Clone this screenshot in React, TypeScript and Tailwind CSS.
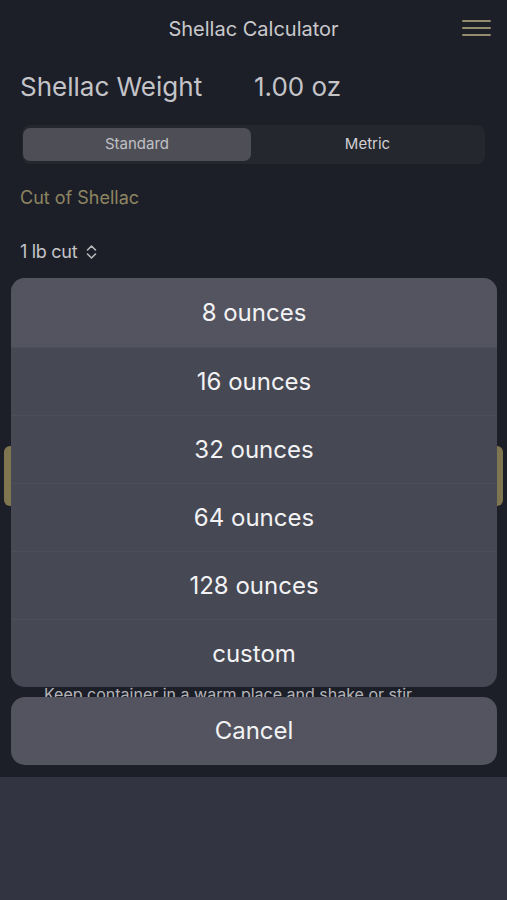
import React from 'react'

const options = ['8 ounces', '16 ounces', '32 ounces', '64 ounces', '128 ounces', 'custom']

function ChevronUpDown() {
  return (
    <svg width="13" height="16" viewBox="0 0 13 16" fill="none" aria-hidden="true">
      <path d="M2.5 6 L6.5 2 L10.5 6" stroke="#b8b8bc" strokeWidth="1.6" strokeLinecap="round" strokeLinejoin="round" />
      <path d="M2.5 10 L6.5 14 L10.5 10" stroke="#b8b8bc" strokeWidth="1.6" strokeLinecap="round" strokeLinejoin="round" />
    </svg>
  )
}

export default function App() {
  return (
    <div
      className="relative flex min-h-[900px] w-[507px] flex-col bg-[#323541]"
      style={{ fontFamily: 'Inter, "Noto Sans", sans-serif' }}
    >
      {/* Page behind the sheet */}
      <div className="flex h-[777px] flex-col overflow-hidden bg-[#1d1f28]">
        <header className="relative flex h-[58px] shrink-0 items-center justify-center">
          <span className="text-[20px] text-[#c9c9cc]">Shellac Calculator</span>
          <div className="absolute right-[16px] top-[20px] flex w-[29px] flex-col gap-[5px]">
            <span className="h-[2px] rounded bg-[#948c6c]" />
            <span className="h-[2px] rounded bg-[#948c6c]" />
            <span className="h-[2px] rounded bg-[#948c6c]" />
          </div>
        </header>

        <div className="flex items-center px-[20px] pt-[9px]">
          <span className="w-[234px] text-[26px] text-[#c4c4c8]">Shellac Weight</span>
          <span className="text-[26px] text-[#c4c4c8]">1.00 oz</span>
        </div>

        <div className="mx-[22px] mt-[19px] flex h-[39px] shrink-0 items-center rounded-[8px] bg-[#25272e] px-[1px]">
          <div className="flex h-[33px] w-[228px] items-center justify-center rounded-[7px] bg-[#4e4f56] text-[15px] text-[#c0c0c4]">
            Standard
          </div>
          <div className="flex flex-1 items-center justify-center text-[15px] text-[#d0d0d4]">Metric</div>
        </div>

        <div className="mt-[20px] px-[20px] text-[18px] text-[#8e8662]">Cut of Shellac</div>

        <div className="mt-[27px] flex items-center gap-[8px] px-[20px]">
          <span className="text-[18px] tracking-[-0.3px] text-[#c4c4c8]">1 lb cut</span>
          <ChevronUpDown />
        </div>

        <div className="mx-[4px] mt-[181px] h-[60px] shrink-0 rounded-[6px] bg-[#7f7650]" />

        <p className="mt-[176px] whitespace-nowrap px-[44px] text-[16px] leading-[24px] text-[#b4b4b8]">
          Keep container in a warm place and shake or stir
        </p>
      </div>

      {/* Action sheet */}
      <div className="absolute left-[11px] top-[278px] w-[486px]">
        <div className="overflow-hidden rounded-[14px] bg-[#464853]">
          {options.map((opt, i) => (
            <div
              key={opt}
              className={`flex items-center justify-center text-[24px] text-[#f2f2f4] ${
                i === 0 ? 'h-[69px] bg-[#53545f]' : 'h-[68px] border-t border-[#4c4e59]'
              }`}
            >
              {opt}
            </div>
          ))}
        </div>
        <div className="mt-[10px] flex h-[68px] items-center justify-center rounded-[14px] bg-[#53545f] text-[24px] text-[#f2f2f4]">
          Cancel
        </div>
      </div>
    </div>
  )
}
